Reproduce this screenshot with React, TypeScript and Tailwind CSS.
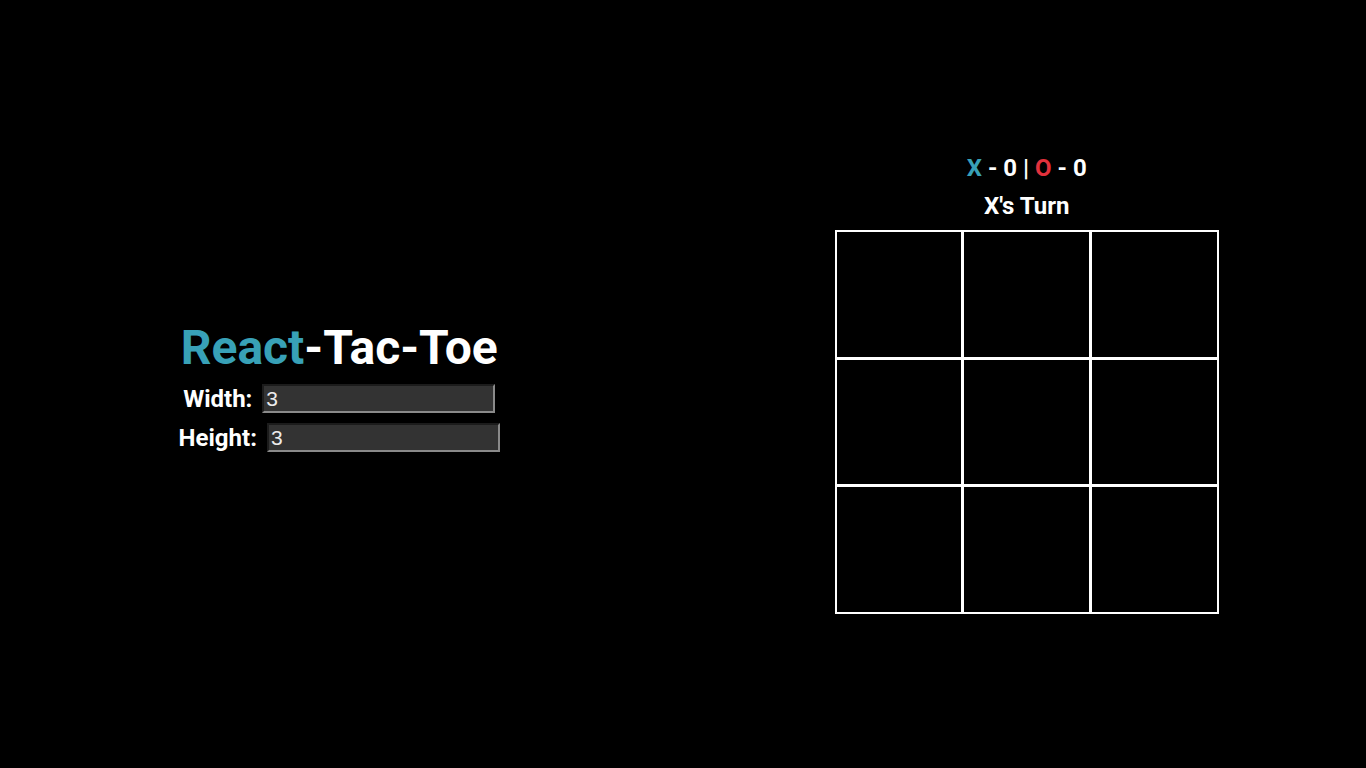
import React, { useState } from 'react';

const font = { fontFamily: 'Roboto, "Liberation Sans", sans-serif' };

const SizeField = ({ label, value, onChange }: { label: string; value: string; onChange: (v: string) => void }) => (
  <div className="flex items-center gap-[10px]">
    <label className="text-[24px] font-bold text-white leading-none">{label}</label>
    <input
      value={value}
      onChange={(e) => onChange(e.target.value)}
      className="w-[233px] h-[29px] bg-[#333333] text-[#ececec] text-[21px] pl-[2px] outline-none border-2 border-t-[#1c1c1c] border-l-[#1c1c1c] border-b-[#8a8a8a] border-r-[#8a8a8a]"
      style={{ fontFamily: '"Liberation Sans", Arial, sans-serif' }}
    />
  </div>
);

export default function App() {
  const [width, setWidth] = useState('3');
  const [height, setHeight] = useState('3');
  const cells = Array.from({ length: 9 });

  return (
    <div className="h-screen w-full bg-black grid grid-cols-2 gap-[9px] items-center" style={font}>
      <div className="flex flex-col items-center pt-[4px]">
        <h1 className="text-[48px] font-bold leading-[56px] text-white">
          <span className="text-[#38a1b7]">React</span>-Tac-Toe
        </h1>
        <div className="flex flex-col items-center gap-[10px] mt-[8px]">
          <SizeField label="Width:" value={width} onChange={setWidth} />
          <SizeField label="Height:" value={height} onChange={setHeight} />
        </div>
      </div>

      <div className="flex flex-col items-center">
        <div className="text-[24px] font-bold text-white leading-[28px]">
          <span className="text-[#38a1b7]">X</span> - 0 | <span className="text-[#e2313c]">O</span> - 0
        </div>
        <div className="text-[24px] font-bold text-white leading-[28px] mt-[10px]">X's Turn</div>
        <div className="mt-[10px] w-[384px] h-[384px] bg-white p-[2px] grid grid-cols-3 grid-rows-3 gap-[3px]">
          {cells.map((_, i) => (
            <button key={i} className="bg-black" />
          ))}
        </div>
      </div>
    </div>
  );
}
